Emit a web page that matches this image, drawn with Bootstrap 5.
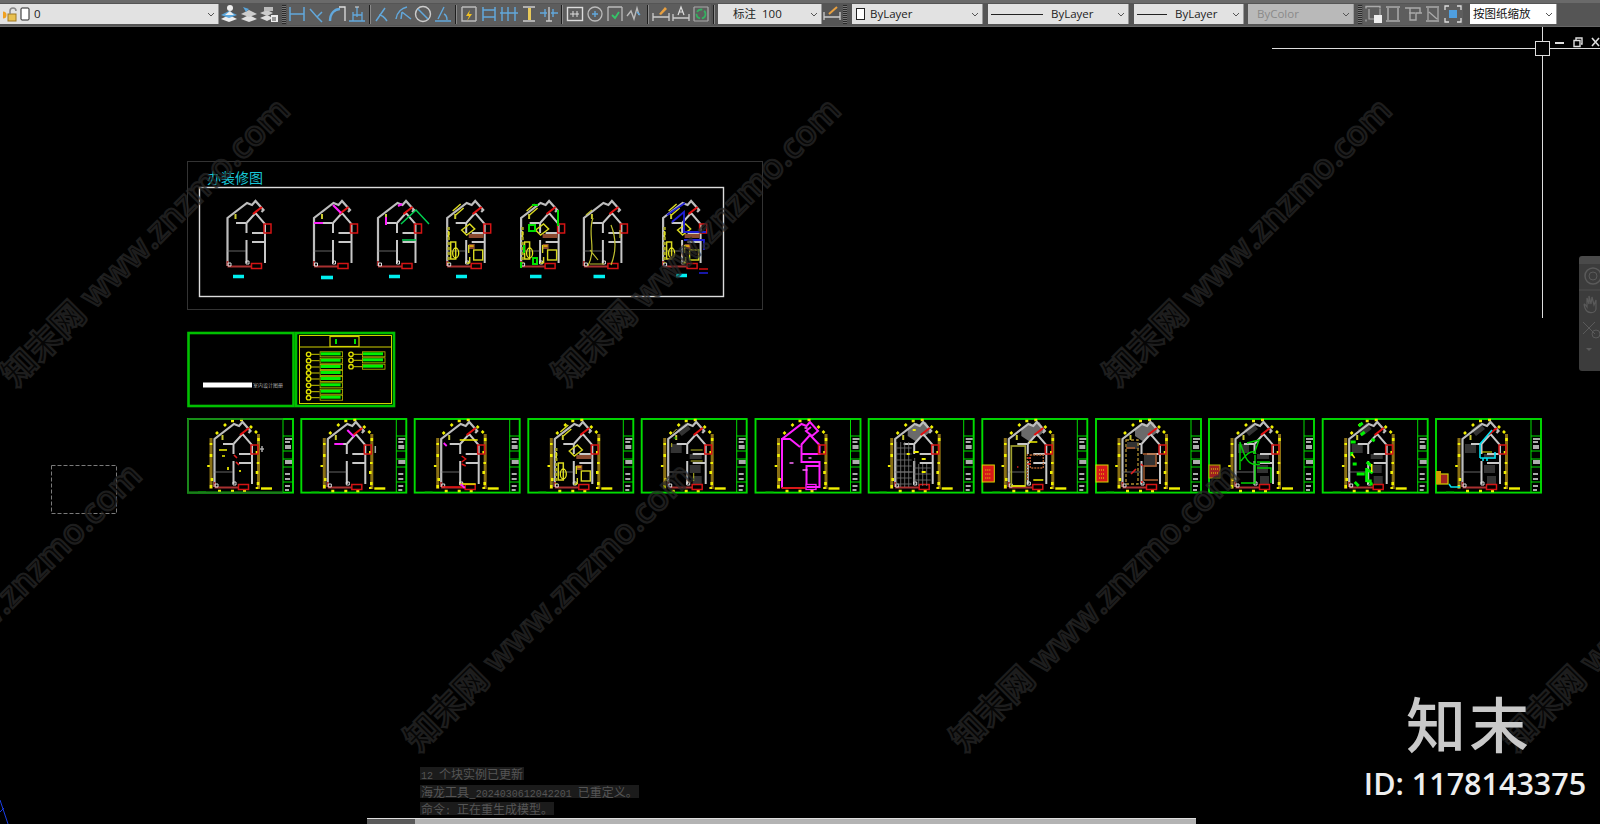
<!DOCTYPE html>
<html lang="zh-CN">
<head>
  <meta charset="UTF-8" />
  <meta name="viewport" content="width=device-width, initial-scale=1" />
  <title>CAD 办装修图</title>
  <link href="https://cdn.jsdelivr.net/npm/bootstrap@5.3.3/dist/css/bootstrap.min.css" rel="stylesheet" />
  <style>
    html, body { height: 824px; overflow: hidden; background: #000; }
    body { font-family: "Open Sans", "Noto Sans CJK SC", sans-serif; }

    .cad-bar { height: 27px; background: #555; border-top: 3px solid #6a6a6a; border-bottom: 1px solid #666; padding-bottom: 1px; }
    .cad-combo { height: 20px; background: #e2e2e2; color: #222; font-size: 11.5px; line-height: 20px; border-right: 1px solid #999; flex: none; padding: 0 3px; }
    .cad-combo .caret { margin-left: auto; width: 8px; height: 5px; flex: none; }
    .cad-combo.off { background: #b9b9b9; color: #8a8a8a; }
    .cad-combo.paper { background: #fff; color: #111; }
    .combo-layer { width: 219px; }
    .combo-dim { width: 104px; margin-left: 1px; padding-left: 15px; }
    .combo-a { width: 131px; margin-left: 4px; }
    .combo-b { width: 141px; margin-left: 5px; }
    .combo-c { width: 110px; margin-left: 5px; }
    .combo-d { width: 106px; margin-left: 4px; padding-left: 9px; }
    .combo-e { width: 87px; margin-left: 7px; }
    .line-sample { height: 1px; background: #222; flex: none; }
    .cad-ico { width: 20px; height: 20px; flex: none; }
    .tool-set { display: flex; align-items: center; background: #5d5d5d; height: 21px; flex: none; }
    .tool-sep { width: 1px; height: 19px; background: #1f1f1f; border-right: 1px solid #8a8a8a; box-sizing: content-box; margin: 0 2px; flex: none; }
    .tool-grip { width: 4px; height: 19px; flex: none; background: repeating-linear-gradient(0deg, #2a2a2a 0 1px, #777 1px 2px); margin: 0 1px; }
    .grip-first { margin-left: 3px; }

    .cad-canvas { position: relative; height: 797px; }
    .cad-sheet { position: absolute; left: 0; top: 0; width: 1600px; height: 797px; display: block; }

    .water-text { font-family: "Open Sans", "Noto Sans CJK SC", sans-serif; font-size: 34px; font-weight: 600; fill: rgba(20, 20, 20, .35); stroke: rgba(42, 42, 42, .7); stroke-width: 2.2px; }
    .title-cyan { font-family: "Noto Sans CJK SC", sans-serif; font-size: 14px; fill: #18c6d6; }
    .tiny-note { font-family: "Noto Sans CJK SC", sans-serif; font-size: 5px; fill: #a8a8a8; }

    .win-tools { position: absolute; top: 9px; right: 0; width: 46px; color: #ddd; }
    .nav-panel { position: absolute; right: 0; top: 229px; width: 21px; height: 115px; background: #3c3c3c; border-radius: 3px 0 0 3px; border-top: 8px solid #4a4a4a; }
    .cmd-log { position: absolute; left: 420px; top: 740px; font-family: "Noto Sans CJK SC", sans-serif; font-size: 12px; color: #555; }
    .cmd-log div { background: #1b1b1b; width: fit-content; height: 13px; line-height: 13px; padding: 0 1px; margin-bottom: 4.5px; white-space: pre; }
    .log-num { font-family: "Liberation Mono", monospace; font-size: 10px; }
    .cmd-input { position: absolute; left: 367px; top: 791px; width: 829px; height: 6px; background: #b3b3b3; border-top: 1px solid #ddd; }
    .cmd-handle { width: 48px; height: 100%; background: #5a5a5a; }
    .brand-box { position: absolute; left: 1360px; top: 662px; width: 230px; color: #c9c9c9; text-align: center; }
    .brand-name { font-family: "Noto Sans CJK SC", sans-serif; font-weight: 500; font-size: 60px; letter-spacing: 3px; line-height: 66px; padding-right: 12px; margin-bottom: 12px; }
    .brand-id { font-family: "Open Sans", sans-serif; font-weight: 600; font-size: 30.5px; line-height: 32px; color: #eee; white-space: nowrap; }
  </style>
</head>
<body>

<svg width="0" height="0" class="d-block" aria-hidden="true">
  <defs>
    <!-- toolbar icons -->
    <symbol id="i-caret" viewBox="0 0 8 5"><path d="M1 1l3 3 3-3" fill="none" stroke="#555"/></symbol>
    <symbol id="i-layer1" viewBox="0 0 20 20"><path d="M2 15l8-4 8 4-8 3z" fill="#eee"/><path d="M2 11l8-4 8 4-8 3z" fill="#5aa6dc"/><circle cx="11" cy="4" r="3" fill="#eee"/><path d="M6 11l5-4 4 4z" fill="#eee"/></symbol>
    <symbol id="i-layer2" viewBox="0 0 20 20"><path d="M2 15l8-4 8 4-8 3z" fill="#ddd"/><path d="M2 10l8-4 8 4-8 3z" fill="#ccc"/><path d="M4 3l6 2-3 3z" fill="#5aa6dc"/></symbol>
    <symbol id="i-layer3" viewBox="0 0 20 20"><path d="M1 14l7-3 6 3-6 3z" fill="#ddd"/><path d="M1 9l7-3 6 3-6 3z" fill="#ccc"/><path d="M5 3h9v4H5z" fill="#bbb"/><rect x="12" y="11" width="7" height="7" fill="#eee"/><path d="M14 13v4M16 13v4" stroke="#444"/></symbol>
    <symbol id="i-d1" viewBox="0 0 20 20"><path d="M3 3v14M17 3v14M3 10h14" fill="none" stroke="#62a8dc" stroke-width="1.5"/></symbol>
    <symbol id="i-d2" viewBox="0 0 20 20"><path d="M3 5l7 8 5-5M10 13l5 5" fill="none" stroke="#62a8dc" stroke-width="1.5"/></symbol>
    <symbol id="i-d3" viewBox="0 0 20 20"><path d="M3 17c0-8 5-12 10-12" fill="none" stroke="#62a8dc" stroke-width="2.4"/><path d="M12 3h6v14" fill="none" stroke="#ddd" stroke-width="1.3"/></symbol>
    <symbol id="i-d4" viewBox="0 0 20 20"><path d="M2 17h16M6 8v9M15 8v9M6 11h9M10 3v10" fill="none" stroke="#62a8dc" stroke-width="1.3"/><path d="M8 3h4" stroke="#ddd"/></symbol>
    <symbol id="i-a1" viewBox="0 0 20 20"><path d="M3 17L12 4M6 11c3 0 6 3 8 6" fill="none" stroke="#62a8dc" stroke-width="1.5"/></symbol>
    <symbol id="i-a2" viewBox="0 0 20 20"><path d="M3 15C4 8 9 4 14 3M9 8l9 7M9 8l-1 7" fill="none" stroke="#62a8dc" stroke-width="1.5"/></symbol>
    <symbol id="i-a3" viewBox="0 0 20 20"><circle cx="10" cy="10" r="7.5" fill="none" stroke="#ccc" stroke-width="1.4"/><path d="M5 5l10 10" stroke="#62a8dc" stroke-width="1.5"/></symbol>
    <symbol id="i-a4" viewBox="0 0 20 20"><path d="M2 17h16M11 3L5 15M14 16c0-3-1-5-3-6" fill="none" stroke="#62a8dc" stroke-width="1.4"/></symbol>
    <symbol id="i-q1" viewBox="0 0 20 20"><path d="M3 3h14M3 3v14h14M17 3v14" fill="none" stroke="#bbb" stroke-width="1.4"/><path d="M11 6l-4 6h3l-2 5 5-7h-3z" fill="#f0c020"/></symbol>
    <symbol id="i-q2" viewBox="0 0 20 20"><path d="M4 3v14M16 3v14M4 6h12M4 13h12" fill="none" stroke="#62a8dc" stroke-width="1.5"/></symbol>
    <symbol id="i-q3" viewBox="0 0 20 20"><path d="M3 3v14M9 3v14M16 3v14M1 9h18" fill="none" stroke="#62a8dc" stroke-width="1.4"/></symbol>
    <symbol id="i-q4" viewBox="0 0 20 20"><path d="M4 3h12M4 17h12" fill="none" stroke="#ccc" stroke-width="1.5"/><path d="M9 4h3v12H9z" fill="#e8c95a"/></symbol>
    <symbol id="i-q5" viewBox="0 0 20 20"><path d="M1 9h7M12 9h7M6 5v8M14 5v8" fill="none" stroke="#62a8dc" stroke-width="1.4"/><path d="M10 3v14M7 17h6" stroke="#ccc" stroke-width="1.3"/></symbol>
    <symbol id="i-m1" viewBox="0 0 20 20"><rect x="2.500" y="3.500" width="15" height="13" fill="none" stroke="#ddd" stroke-width="1.4"/><path d="M5 10h9M12 7v6M8 7v6" stroke="#ddd"/></symbol>
    <symbol id="i-m2" viewBox="0 0 20 20"><circle cx="10" cy="10" r="7" fill="none" stroke="#bbb" stroke-width="1.3"/><path d="M7 10h6M10 7v6" stroke="#62a8dc" stroke-width="1.4"/></symbol>
    <symbol id="i-m3" viewBox="0 0 20 20"><path d="M3 3h14M3 3v14M17 3v14" fill="none" stroke="#bbb" stroke-width="1.3"/><path d="M7 11l3 3 4-6" fill="none" stroke="#35c468" stroke-width="1.8"/></symbol>
    <symbol id="i-m4" viewBox="0 0 20 20"><path d="M2 12l4-5 3 8 3-11 2 7" fill="none" stroke="#bbb" stroke-width="1.4"/><path d="M12 8l3 3" stroke="#62a8dc" stroke-width="1.4"/></symbol>
    <symbol id="i-t1" viewBox="0 0 20 20"><path d="M2 17V9M18 17V9M2 13h16" fill="none" stroke="#ccc" stroke-width="1.3"/><path d="M8 10l6-7 2 2-6 6z" fill="#e8a040"/></symbol>
    <symbol id="i-t2" viewBox="0 0 20 20"><path d="M2 17V10M18 17V10M2 14h16" fill="none" stroke="#ccc" stroke-width="1.3"/><path d="M7 11l3-8 3 8M8 8h4" fill="none" stroke="#ddd" stroke-width="1.2"/></symbol>
    <symbol id="i-t3" viewBox="0 0 20 20"><path d="M3 3h14M3 17h14M3 3v14M17 3v14" fill="none" stroke="#aaa" stroke-width="1.2"/><circle cx="10" cy="10" r="4.500" fill="none" stroke="#35b060" stroke-width="1.8" stroke-dasharray="6 2"/></symbol>
    <symbol id="i-r0" viewBox="0 0 20 20"><path d="M3 4.500v-2h14v2" fill="none" stroke="#aaa" stroke-width="1.4"/><path d="M3 17.500v-2M17 5v8M6 5v10h7" fill="none" stroke="#aaa" stroke-width="1.2"/><rect x="11" y="11" width="8" height="8" fill="#eee"/></symbol>
    <symbol id="i-r1" viewBox="0 0 20 20"><path d="M3 3h14M3 17h14M5 4v12M15 4v12" fill="none" stroke="#aaa" stroke-width="1.5"/></symbol>
    <symbol id="i-r2" viewBox="0 0 20 20"><path d="M2 4h15v5M7 4v12h6V9h6M12 9H6" fill="none" stroke="#aaa" stroke-width="1.4"/></symbol>
    <symbol id="i-r3" viewBox="0 0 20 20"><path d="M3 3h13M3 17h13M5 4v12M15 4v12M6 8l8 7" fill="none" stroke="#aaa" stroke-width="1.3"/></symbol>
    <symbol id="i-r4" viewBox="0 0 20 20"><path d="M2 6V2h4M14 2h4v4M2 14v4h4M14 18h4v-4" fill="none" stroke="#ddd" stroke-width="1.3"/><rect x="6" y="6" width="8" height="8" fill="#4f9fe0"/></symbol>
    <symbol id="i-drawer" viewBox="0 0 20 20"><path d="M2 16V8M18 16V8M2 13h16" fill="none" stroke="#ccc" stroke-width="1.3"/><path d="M7 10l8-7" stroke="#e8a040" stroke-width="2"/></symbol>

    <!-- floor plan, origin is the sheet corner -->
    <g id="plan-shell" fill="none" stroke-linejoin="miter">
      <path d="M27.500 69V21L47 6l5 2 3.500-4 8 9-2 2" stroke="#bdbdbd" stroke-width="2.200"/>
      <path d="M46.500 26v10M46.500 43v23M46.500 26l9-10 9.500 11v39M52 36h13M52 45h13M36 26h10" stroke="#c8c8c8" stroke-width="2"/>
      <path d="M27 54h19" stroke="#909090" stroke-width=".7"/>
      <path d="M27.500 69.500h24M27.500 64v5" stroke="#a83030" stroke-width="2"/>
      <path d="M53 17l9-7" stroke="#e01010" stroke-width="2.200"/>
      <rect x="64" y="27" width="7" height="9" stroke="#d41414" stroke-width="1.500"/>
      <rect x="51.500" y="66.500" width="10" height="5" stroke="#d41414" stroke-width="1.500"/>
      <path d="M35.500 17v5" stroke="#c8c830" stroke-width="2"/>
      <path d="M28 66h3v3h-3zM46 64h3v3h-3z" stroke="#ddd"/>
    </g>
    <g id="sheet-frame">
      <rect x="1" y="1" width="105" height="73.600" fill="#000" stroke="#00dc00" stroke-width="1.900"/>
      <path d="M96 1v74M96 18h10M96 33h10M96 41h10M96 49h10M96 64h10" stroke="#00dc00" fill="none"/>
      <path d="M98 21h7M98 24h5M98 28h6M98 30h6M98 43h7M98 45h7M98 56h5M98 61h5M98 68h5M98 72h4" stroke="#e4e4e4" stroke-width="1.400"/>
      <path d="M11 74h8" stroke="#00a800"/>
      <path d="M74 70.500h11" stroke="#f2f200" stroke-width="2.400"/>
      <path d="M24 20v51M71.500 16v55" stroke="#8a7014" stroke-width="3"/>
      <path d="M24 25v2M24 36v3M21.500 47v2M25 60v3M24 67v3M71.500 20v3M70 33v3M71 44v2M70 53v3M71 64v3M70 69v2M31 73h3M44 73h3M56 73h3M37 8l2-2M44 3h3M53 2h3M63 8l2 2M68 13l2 2M29 16l2-2" stroke="#f0f000" stroke-width="2.600" fill="none"/>
    </g>
    <g id="cover-row">
      <circle cx="0" cy="0" r="2.200" fill="none" stroke="#e0e000" stroke-width="1.400"/>
      <path d="M2 0h9" stroke="#c8c800"/>
      <rect x="11.500" y="-2.500" width="22.500" height="5" fill="#000" stroke="#bcbc00" stroke-width=".8"/>
      <rect x="12" y="-2" width="20" height="3" fill="#00f000"/>
    </g>
    <g id="furn-a">
      <path d="M31 45h5v17h-5zM42 33l8-6 5 5-8 6zM33 14l8-7M36 18l8-7" fill="none" stroke="#d8d820" stroke-width="1.500"/>
      <ellipse cx="36" cy="56" rx="3" ry="5" fill="none" stroke="#e8e820" stroke-width="1.300"/>
      <rect x="54" y="53" width="9" height="10" fill="none" stroke="#d8d820" stroke-width="1.400"/>
      <path d="M49 37h15v4H49zM49 47h6v5h-6z" fill="#8a4a30"/>
      <path d="M50 49h4" stroke="#f0c000" stroke-width="1.500"/>
      <path d="M29 30v36" stroke="#a0a020" stroke-width="2.400" stroke-dasharray="3 2"/>
      <path d="M29 34v6M50 60v6M49 48v8M47 66h3" stroke="#d8d820" stroke-width="1.400"/>
    </g>
    <g id="hatch">
      <path d="M29 24v45M33 24v45M37 24v45M41 24v45M47 40v28M51 46v22M55 46v22M59 46v22M28 30h16M28 36h16M28 42h16M28 48h16M28 54h16M28 60h16M28 66h16M46 50h17M46 56h17M46 62h17" stroke="#777" stroke-width=".8" fill="none"/>
    </g>
    <path id="roof-fill" d="M40 11l9-6 9 7-9 12-9-6zM50 7l8-3 6 9-8 6z" fill="#6a6a6a"/>
    <g id="red-block">
      <rect x="0" y="27" width="12" height="17" fill="#d81818" stroke="#d8d800"/>
      <path d="M3 32h6M3 36h5M3 40h6" stroke="#e8e800" stroke-dasharray="1 1"/>
    </g>
    <g id="dark-furn">
      <path d="M36 12l9-7 5 6-9 7zM30 26h11v9H30zM49 36h12v5H49zM49 47h11v8H49zM52 58h9v9h-9z" fill="#333"/>
    </g>
  </defs>
</svg>

<div class="cad-bar d-flex align-items-center">
  <div class="cad-combo combo-layer d-flex align-items-center gap-1">
    <svg width="27" height="16" viewBox="0 0 27 16"><circle cx="0" cy="9" r="3.500" fill="#f0a020"/><rect x="5" y="8" width="8" height="7" fill="#e8c050" stroke="#a07820"/><path d="M7 8V5a3 3 0 0 1 6 0" fill="none" stroke="#888" stroke-width="1.500"/><rect x="18" y="2" width="8" height="12" rx="1" fill="#fff" stroke="#222"/></svg>
    <span>0</span>
    <svg class="caret" viewBox="0 0 8 5"><use href="#i-caret"/></svg>
  </div>
  <div class="d-flex align-items-center flex-none">
    <svg class="cad-ico"><use href="#i-layer1"/></svg>
    <svg class="cad-ico"><use href="#i-layer2"/></svg>
    <svg class="cad-ico"><use href="#i-layer3"/></svg>
  </div>
  <div class="tool-grip grip-first"></div>
  <div class="tool-set">
    <svg class="cad-ico"><use href="#i-d1"/></svg>
    <svg class="cad-ico"><use href="#i-d2"/></svg>
    <svg class="cad-ico"><use href="#i-d3"/></svg>
    <svg class="cad-ico"><use href="#i-d4"/></svg>
    <div class="tool-sep"></div>
    <svg class="cad-ico"><use href="#i-a1"/></svg>
    <svg class="cad-ico"><use href="#i-a2"/></svg>
    <svg class="cad-ico"><use href="#i-a3"/></svg>
    <svg class="cad-ico"><use href="#i-a4"/></svg>
    <div class="tool-sep"></div>
    <svg class="cad-ico"><use href="#i-q1"/></svg>
    <svg class="cad-ico"><use href="#i-q2"/></svg>
    <svg class="cad-ico"><use href="#i-q3"/></svg>
    <svg class="cad-ico"><use href="#i-q4"/></svg>
    <svg class="cad-ico"><use href="#i-q5"/></svg>
    <div class="tool-sep"></div>
    <svg class="cad-ico"><use href="#i-m1"/></svg>
    <svg class="cad-ico"><use href="#i-m2"/></svg>
    <svg class="cad-ico"><use href="#i-m3"/></svg>
    <svg class="cad-ico"><use href="#i-m4"/></svg>
    <div class="tool-sep"></div>
    <svg class="cad-ico"><use href="#i-t1"/></svg>
    <svg class="cad-ico"><use href="#i-t2"/></svg>
    <svg class="cad-ico"><use href="#i-t3"/></svg>
  </div>
  <div class="tool-sep"></div>
  <div class="cad-combo combo-dim d-flex align-items-center">
    <span>标注&nbsp;&nbsp;100</span>
    <svg class="caret" viewBox="0 0 8 5"><use href="#i-caret"/></svg>
  </div>
  <svg class="cad-ico"><use href="#i-drawer"/></svg>
  <div class="tool-grip"></div>
  <div class="cad-combo combo-a d-flex align-items-center gap-1">
    <svg width="11" height="14" viewBox="0 0 11 14"><rect x="1.500" y="1.500" width="8" height="11" fill="#fff" stroke="#222"/></svg>
    <span>ByLayer</span>
    <svg class="caret" viewBox="0 0 8 5"><use href="#i-caret"/></svg>
  </div>
  <div class="cad-combo combo-b d-flex align-items-center gap-1">
    <span class="line-sample" style="width: 52px"></span><span class="ms-1">ByLayer</span>
    <svg class="caret" viewBox="0 0 8 5"><use href="#i-caret"/></svg>
  </div>
  <div class="cad-combo combo-c d-flex align-items-center gap-1">
    <span class="line-sample" style="width: 30px"></span><span class="ms-1">ByLayer</span>
    <svg class="caret" viewBox="0 0 8 5"><use href="#i-caret"/></svg>
  </div>
  <div class="cad-combo combo-d off d-flex align-items-center">
    <span>ByColor</span>
    <svg class="caret" viewBox="0 0 8 5"><use href="#i-caret"/></svg>
  </div>
  <div class="tool-grip ms-1"></div>
  <div class="tool-set">
    <svg class="cad-ico"><use href="#i-r0"/></svg>
    <svg class="cad-ico"><use href="#i-r1"/></svg>
    <svg class="cad-ico"><use href="#i-r2"/></svg>
    <svg class="cad-ico"><use href="#i-r3"/></svg>
    <svg class="cad-ico"><use href="#i-r4"/></svg>
  </div>
  <div class="cad-combo combo-e paper d-flex align-items-center">
    <span>按图纸缩放</span>
    <svg class="caret" viewBox="0 0 8 5"><use href="#i-caret"/></svg>
  </div>
</div>

<main class="cad-canvas">
  <svg class="cad-sheet" viewBox="0 27 1600 797">
    <!-- top layout group -->
    <rect x="187.500" y="161.500" width="575" height="148" fill="none" stroke="#333"/>
    <rect x="199.500" y="187.500" width="524" height="109" fill="none" stroke="#dcdcdc" stroke-width="1.400"/>
    <text class="title-cyan" x="207" y="183">办装修图</text>

    <use href="#plan-shell" x="200" y="197"/>
    <use href="#plan-shell" x="286.500" y="197"/>
    <use href="#plan-shell" x="350.500" y="197"/>
    <use href="#plan-shell" x="419.700" y="197"/>
    <use href="#furn-a" x="419.700" y="197"/>
    <use href="#plan-shell" x="493.600" y="197"/>
    <use href="#furn-a" x="493.600" y="197"/>
    <path d="M529 225h6v6h-6zM532 205h6M524 245v8M533 258h4v6h-4zM558 210v16M521 262v6" stroke="#00e000" stroke-width="2" fill="none"/>
    <use href="#plan-shell" x="556.400" y="197"/>
    <path d="M593 218c-6 16 4 30-5 48M611 225c4 10 6 25 0 40M590 250l8 10M590 264h14M586 215l6-5M620 230v8" stroke="#c0c030" stroke-width="1.200" fill="none"/>
    <use href="#plan-shell" x="635.600" y="197"/>
    <use href="#furn-a" x="635.600" y="197"/>
    <path d="M667 215l18-12M672 222l12-10v20h22M684 240h20v10" stroke="#2020d8" stroke-width="1.800" fill="none"/>
    <path d="M699 269h9" stroke="#d01010" stroke-width="1.500"/><path d="M699 273h9" stroke="#2020e0" stroke-width="1.500"/>
    <path d="M333 205l8 8M323 223h-9" stroke="#ff20ff" stroke-width="2.200" fill="none"/>
    <path d="M401 224l15-14 13 14M402 240h14" stroke="#00d050" stroke-width="1.500" fill="none"/>
    <path d="M386 217v8M398 206l4-2" stroke="#ff20ff" stroke-width="2"/>

    <path d="M233 276.500h11M389 276.500h11M456 276.500h11M530 276.500h11.500M593.500 276.500h11.500M676 275.500h11" stroke="#00f0f0" stroke-width="3.600"/>
    <path d="M321 277.500h12" stroke="#00f0f0" stroke-width="3.600"/>

    <!-- cover and index sheets -->
    <rect x="188.500" y="333" width="105" height="73" fill="none" stroke="#00c000" stroke-width="2.600"/>
    <rect x="203" y="382.500" width="49" height="5" fill="#fff"/>
    <text class="tiny-note" x="253" y="387">室内设计图册</text>
    <rect x="296" y="333" width="98" height="73" fill="none" stroke="#00c000" stroke-width="2.600"/>
    <rect x="299.500" y="335.500" width="92" height="68" fill="none" stroke="#d0d000"/>
    <path d="M300 347h91" stroke="#d0d000"/>
    <rect x="330" y="336.500" width="29" height="10" fill="none" stroke="#d0d000" stroke-width="1.200"/>
    <path d="M336 339v5M355 339v5" stroke="#00e000" stroke-width="2"/>
    <use href="#cover-row" x="308.600" y="354.300"/>
    <use href="#cover-row" x="308.600" y="360.700"/>
    <use href="#cover-row" x="308.600" y="367"/>
    <use href="#cover-row" x="308.600" y="373"/>
    <use href="#cover-row" x="308.600" y="379"/>
    <use href="#cover-row" x="308.600" y="385.300"/>
    <use href="#cover-row" x="308.600" y="391.700"/>
    <use href="#cover-row" x="308.600" y="397.700"/>
    <use href="#cover-row" x="351" y="354.300"/>
    <use href="#cover-row" x="351" y="360.300"/>
    <use href="#cover-row" x="351" y="366.700"/>

    <!-- plan sheets -->
    <g transform="translate(187 418)">
      <use href="#sheet-frame"/>
      <path d="M1 1h95M1 1v73.600h95" fill="none" stroke="#1f7a1f" stroke-width="1.700"/>
      <use href="#plan-shell"/>
      <path d="M32 32h8M41 49v3M53 52v2M35 38h3" stroke="#f0f000" stroke-width="1.700" fill="none"/>
      <path d="M47 37l3 3M49 44l3 3" stroke="#e02020" stroke-width="1.700"/>
      <path d="M73 31h4M75 28v6" stroke="#aaa" stroke-width="1.500"/>
    </g>
    <g transform="translate(300.300 418)">
      <use href="#sheet-frame"/><use href="#plan-shell"/>
      <path d="M47 12l7 7M34 26h9" stroke="#ff20ff" stroke-width="2" fill="none"/>
      <path d="M75 28v7" stroke="#aaa" stroke-width="1.500"/>
    </g>
    <g transform="translate(413.700 418)">
      <use href="#sheet-frame"/><use href="#plan-shell"/>
      <path d="M46 22h18M46 66h16" stroke="#f0f000" stroke-width="1.700" fill="none"/>
      <path d="M28 69h24M48 38l4 3-4 3M48 46l4 2" stroke="#e01010" stroke-width="1.500" fill="none"/>
      <path d="M47 66l4 4M30 25l3 3" stroke="#ff20ff" stroke-width="1.800"/>
    </g>
    <g transform="translate(527.300 418)">
      <use href="#sheet-frame"/><use href="#plan-shell"/><use href="#furn-a"/>
    </g>
    <g transform="translate(640.700 418)">
      <use href="#sheet-frame"/><use href="#dark-furn"/><use href="#plan-shell"/>
      <path d="M31 25v4M32 15l4-4M50 32h12M50 43h12M53 55v8" stroke="#b8b820" fill="none"/>
      <path d="M33 20h3" stroke="#00b000"/>
    </g>
    <g transform="translate(754.500 418)">
      <use href="#sheet-frame"/>
      <path d="M27.500 70V21h8l10 8M27.500 21L47 6l5 2 3.500-4 8 9-6 5-6-5 5-4M46.500 27l9-10 9.500 10v9H47v-9M47 36v8h18v4H52v18M65 48v21H52" fill="none" stroke="#ff20ff" stroke-width="2"/>
      <path d="M27 70h24" stroke="#d81818" stroke-width="2"/>
      <path d="M64 27h7v9h-7z" fill="none" stroke="#d41414" stroke-width="1.500"/>
      <rect x="51.500" y="66.500" width="10" height="5" fill="none" stroke="#ff20ff" stroke-width="1.300"/>
      <path d="M35 45h4M48 52h5M54 40h3M50 10h3" stroke="#ff70ff" stroke-width="1.500"/>
    </g>
    <g transform="translate(867.700 418)">
      <use href="#sheet-frame"/><use href="#roof-fill"/><use href="#plan-shell"/><use href="#hatch"/>
      <path d="M45 12h3M46 34h5M54 41h4M54 54h4M39 36h3" stroke="#f0f000" stroke-width="2.200"/>
    </g>
    <g transform="translate(981.300 418)">
      <use href="#sheet-frame"/><use href="#roof-fill"/><use href="#plan-shell"/>
      <rect x="30" y="28" width="14" height="40" fill="none" stroke="#a0a030" stroke-width="1.700"/>
      <path d="M30 68h14M48 24h8M52 62h10" stroke="#f0f000" stroke-width="1.700"/>
      <path d="M46 36v26M49 37h13v13H49z" fill="none" stroke="#b06030" stroke-width="1.300" stroke-dasharray="2 1"/>
      <path d="M36 49h1M47 40h2M47 46h2" stroke="#e02020" stroke-width="2.200"/>
      <use href="#red-block" transform="translate(1 20)"/>
    </g>
    <g transform="translate(1095 418)">
      <use href="#sheet-frame"/><use href="#roof-fill"/><use href="#plan-shell"/>
      <path d="M32 24h12v7H32zM49 37h13v12H49z" fill="#333"/>
      <rect x="31" y="22" width="12" height="44" fill="none" stroke="#b09030" stroke-width="1.300" stroke-dasharray="3 2"/>
      <path d="M48 36h13v12H49v14h14M31 30h9" fill="none" stroke="#b06030" stroke-width="1.300"/>
      <path d="M36 56l5-5M47 63v2M46 46l2 2" stroke="#e02020" stroke-width="1.700"/>
      <use href="#red-block" transform="translate(1 20)"/>
    </g>
    <g transform="translate(1208 418)">
      <use href="#sheet-frame"/><use href="#dark-furn"/><use href="#plan-shell"/>
      <path d="M32 24c5 16 8 25 20 22M32 24v28M33 43c6-8 12-12 15-7M46 36l5-14-12 3M47 37v28H33M49 50h14v15M49 44h13" fill="none" stroke="#00d000" stroke-width="1.400"/>
      <rect x="1" y="47" width="11" height="13" fill="#a02020" stroke="#b0b000"/>
      <path d="M3 51h7M3 55h7" stroke="#e0e000" stroke-dasharray="1 1"/>
    </g>
    <g transform="translate(1321.700 418)">
      <use href="#sheet-frame"/><use href="#dark-furn"/><use href="#plan-shell"/>
      <path d="M37 8l4-3M29 24h5M30 34v4M31 46h4M45 44l5 4M35 56h8M45 50v14M46 52l5 3M45 63h5M33 64l4 4M48 66h3M39 17l4-3M50 21l3 2" stroke="#00f000" stroke-width="3" fill="none"/>
      <path d="M30 36l3 4M50 46v8" stroke="#f0f000" stroke-width="1.500"/>
    </g>
    <g transform="translate(1435 418)">
      <use href="#sheet-frame"/><use href="#dark-furn"/><use href="#plan-shell"/>
      <path d="M45 40V26l12-14M45 40h15v-6M48 40v3M52 40v3" fill="none" stroke="#00e0f0" stroke-width="1.600"/>
      <path d="M47 34h10" stroke="#f0f000"/>
      <rect x="2" y="56" width="11" height="10" fill="#a02020" stroke="#d0d000" stroke-width="1.200"/>
      <rect x="1" y="53" width="5" height="13" fill="#d0a000"/>
      <path d="M14 66l2 3h9" stroke="#00e0f0" stroke-width="1.500" fill="none"/>
    </g>

    <!-- selection box and crosshair -->
    <rect x="51.500" y="465.500" width="65" height="48" fill="none" stroke="#7a7a7a" stroke-dasharray="4 2"/>
    <path d="M0 800l8 24M0 812l4-4" stroke="#1a3ce0" fill="none"/>
    <path d="M1272 48.500H1600M1542.500 27V318" stroke="#ddd"/>
    <rect x="1535.500" y="41.500" width="14" height="14" fill="#000" stroke="#ddd"/>

    <!-- watermark -->
    <g>
      <text class="water-text" transform="translate(16 388) rotate(-45)">知末网 www.znzmo.com</text>
      <text class="water-text" transform="translate(567 388) rotate(-45)">知末网 www.znzmo.com</text>
      <text class="water-text" transform="translate(1118 388) rotate(-45)">知末网 www.znzmo.com</text>
      <text class="water-text" transform="translate(-132 753) rotate(-45)">知末网 www.znzmo.com</text>
      <text class="water-text" transform="translate(419 753) rotate(-45)">知末网 www.znzmo.com</text>
      <text class="water-text" transform="translate(965 753) rotate(-45)">知末网 www.znzmo.com</text>
      <text class="water-text" transform="translate(1516 753) rotate(-45)">知末网 www.znzmo.com</text>
    </g>
  </svg>

  <div class="win-tools d-flex align-items-center justify-content-between">
    <svg width="12" height="12" viewBox="0 0 12 12"><path d="M1 7h9" stroke="#ddd" stroke-width="2"/></svg>
    <svg width="12" height="12" viewBox="0 0 12 12"><path d="M2 4.500h6v6H2zM4 4V2h6v6H9" fill="none" stroke="#ddd" stroke-width="1.400"/></svg>
    <svg width="10" height="12" viewBox="0 0 10 12"><path d="M2 2l7 8M9 2l-7 8" stroke="#ddd" stroke-width="1.600"/></svg>
  </div>

  <div class="nav-panel">
    <svg width="21" height="100" viewBox="0 0 21 100">
      <circle cx="14" cy="12" r="8" fill="none" stroke="#5a5a5a" stroke-width="1.500"/><circle cx="14" cy="12" r="4" fill="none" stroke="#5a5a5a"/>
      <path d="M0 26h21" stroke="#4e4e4e"/>
      <path d="M6 44c-2-6 0-4 2-1v-9l2 6v-8l2 8 1-7 2 8 2-5v9c-1 5-9 5-11-1z" fill="none" stroke="#5a5a5a" stroke-width="1.200"/>
      <path d="M4 58l12 12M16 58L4 70" stroke="#5a5a5a"/><circle cx="17" cy="70" r="4" fill="none" stroke="#5a5a5a"/>
      <path d="M7 84l3 3 3-3z" fill="#5a5a5a"/>
    </svg>
  </div>

  <div class="cmd-log">
    <div><span class="log-num">12 </span>个块实例已更新</div>
    <div>海龙工具_<span class="log-num">2024030612042201 </span>已重定义。</div>
    <div>命令<span class="log-num">: </span>正在重生成模型。</div>
  </div>
  <div class="cmd-input"><div class="cmd-handle"></div></div>

  <div class="brand-box">
    <div class="brand-name">知末</div>
    <div class="brand-id">ID: 1178143375</div>
  </div>
</main>

<script src="https://cdn.jsdelivr.net/npm/bootstrap@5.3.3/dist/js/bootstrap.bundle.min.js"></script>
</body>
</html>
